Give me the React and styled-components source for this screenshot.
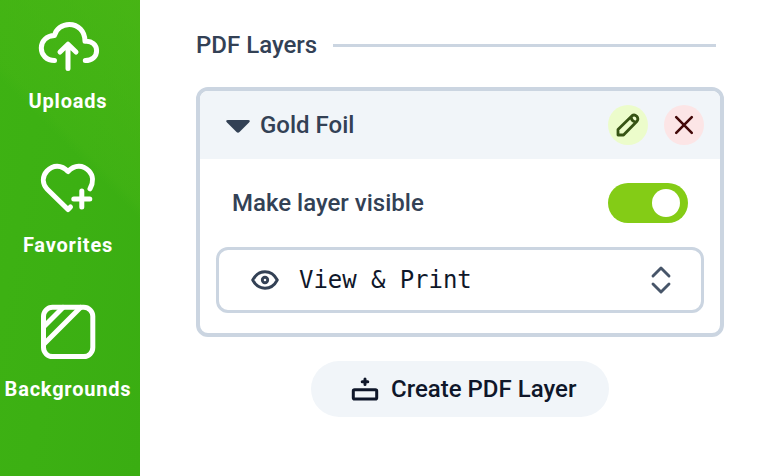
import React from "react";
import styled, { createGlobalStyle } from "styled-components";

const GlobalStyle = createGlobalStyle`
  * { box-sizing: border-box; }
  body {
    margin: 0;
    background: #fff;
    font-family: Roboto, sans-serif;
    overflow: hidden;
  }
  button { font: inherit; border: 0; padding: 0; color: inherit; }
  svg { display: block; flex: none; }
`;

const Page = styled.div`
  display: flex;
  width: 778px;
  height: 476px;
`;

const Sidebar = styled.nav`
  width: 140px;
  flex: none;
  background:
    linear-gradient(45deg, transparent 64.5%, rgba(76, 184, 22, 0.25) 67%, rgba(79, 184, 22, 0.6) 100%),
    linear-gradient(100deg, #3eb213 0%, #3cb013 50%, #3aad12 100%);
`;

const SidebarItem = styled.a`
  display: flex;
  flex-direction: column;
  height: 144px;
  padding-top: 15px;
  color: #fff;
`;

const SidebarIcon = styled.svg`
  width: 64px;
  height: 64px;
  margin-left: 36px;
  fill: none;
  stroke: currentColor;
  stroke-width: 5;
  stroke-linecap: round;
  stroke-linejoin: round;
`;

const SidebarLabel = styled.span`
  margin-top: 10px;
  width: 136px;
  text-align: center;
  font-size: 20px;
  line-height: 24px;
  font-weight: 700;
  letter-spacing: 0.8px;
  white-space: nowrap;
`;

const Panel = styled.main`
  width: 528px;
  margin-left: 56px;
  padding-top: 27px;
  display: flex;
  flex-direction: column;
`;

const Heading = styled.h2`
  margin: 0;
  padding-right: 8px;
  display: flex;
  align-items: center;
  gap: 16px;
  height: 36px;
  font-size: 24px;
  font-weight: 500;
  color: #334155;
  &::after {
    content: "";
    flex: 1;
    height: 3px;
    background: #cbd5e1;
  }
`;

const Card = styled.section`
  margin-top: 24px;
  height: 250px;
  border: 4px solid #cbd5e1;
  border-radius: 12px;
  overflow: hidden;
  color: #334155;
  font-size: 24px;
  font-weight: 500;
`;

const CardHeader = styled.header`
  display: flex;
  align-items: center;
  height: 68px;
  padding: 0 16px 0 26px;
  background: #f1f5f9;
`;

const LayerName = styled.span`
  margin-left: 10px;
  flex: 1;
`;

const RoundButton = styled.button`
  display: grid;
  place-items: center;
  width: 40px;
  height: 40px;
  margin-left: 16px;
  border-radius: 50%;
  background: ${(p) => p.$background};
  color: ${(p) => p.$color};
`;

const CardBody = styled.div`
  padding: 24px 16px 20px;
`;

const SettingRow = styled.div`
  display: flex;
  align-items: center;
  justify-content: space-between;
  padding: 0 16px;
  height: 40px;
`;

const Toggle = styled.button`
  display: flex;
  align-items: center;
  justify-content: flex-end;
  width: 80px;
  height: 40px;
  padding-right: 8px;
  border-radius: 20px;
  background: #84cc16;
`;

const Knob = styled.span`
  width: 28px;
  height: 28px;
  border-radius: 50%;
  background: #fff;
`;

const Select = styled.button`
  display: flex;
  align-items: center;
  width: 100%;
  height: 66px;
  margin-top: 24px;
  padding: 0 29px 0 31px;
  border: 3px solid #cbd5e1;
  border-radius: 12px;
  background: #fff;
`;

const SelectValue = styled.span`
  flex: 1;
  margin-left: 19px;
  text-align: left;
  font-family: "DejaVu Sans Mono", monospace;
  font-size: 24px;
  font-weight: 400;
  letter-spacing: -0.06px;
  color: #0f172a;
`;

const CreateButton = styled.button`
  align-self: center;
  display: flex;
  align-items: center;
  gap: 12px;
  height: 56px;
  width: 298px;
  padding-left: 40px;
  margin-top: 24px;
  border-radius: 28px;
  background: #f1f5f9;
  color: #0f172a;
  font-size: 24px;
  font-weight: 500;
  white-space: nowrap;
`;

const LineIcon = styled.svg`
  fill: none;
  stroke: ${(p) => p.$color || "currentColor"};
  stroke-width: ${(p) => p.$weight || 2.5};
  stroke-linecap: round;
  stroke-linejoin: round;
`;

const sidebarItems = [
  {
    label: "Uploads",
    icon: (
      <>
        <path d="M18.5 45.5C10.5 45.5 5.3 40 5.3 33C5.3 26 10.5 20.7 18.5 20.5C20 14 26 9.5 33.3 9.5C42 9.5 49 16 49 26.3C56 25.5 60.6 30 60.6 35.7C60.6 41.5 56 45.5 49.3 45.5" />
        <path d="M32 53.5V29.5M24 37L32 29.2L40 37" />
      </>
    ),
  },
  {
    label: "Favorites",
    icon: (
      <>
        <path d="M54 29.8C57.6 23.500 57.300 16.500 53 12C47 5.500 38.500 5.500 32 12.500C25.500 5.500 17 5.500 11 12C6 17.500 6.300 24.500 11 30L32 50.500L34.500 48" />
        <path d="M37.800 40H53.800M45.800 32V48" />
      </>
    ),
  },
  {
    label: "Backgrounds",
    icon: (
      <>
        <rect x="7.5" y="4.300" width="49.300" height="49.300" rx="9" />
        <path d="M8 23.500L27 4.500M8 41L44.500 4.500" />
      </>
    ),
  },
];

export default function App() {
  return (
    <>
      <GlobalStyle />
      <Page>
        <Sidebar>
          {sidebarItems.map(({ label, icon }) => (
            <SidebarItem key={label}>
              <SidebarIcon viewBox="0 0 64 64">{icon}</SidebarIcon>
              <SidebarLabel>{label}</SidebarLabel>
            </SidebarItem>
          ))}
        </Sidebar>
        <Panel>
          <Heading>PDF Layers</Heading>
          <Card>
            <CardHeader>
              <svg width="24" height="15" viewBox="0 0 24 15" fill="#334155">
                <path d="M2 2H22Q25 2 23 4.500L13.500 14Q12 15.500 10.500 14L1 4.500Q-1 2 2 2Z" />
              </svg>
              <LayerName>Gold Foil</LayerName>
              <RoundButton $background="#ecfccb" $color="#365314" aria-label="Edit layer">
                <LineIcon width="24" height="24" viewBox="0 0 24 24" $weight={2.8}>
                  <path d="M2 22V16.500L15.800 2.900Q18.300 1 20.700 3.200Q22.800 5.700 21 8.200L7.500 22ZM15.300 4.200Q15.500 8.500 19.800 8.800" />
                </LineIcon>
              </RoundButton>
              <RoundButton $background="#fce5e6" $color="#450a0a" aria-label="Delete layer">
                <LineIcon width="24" height="24" viewBox="0 0 24 24" $weight={2.6}>
                  <path d="M4.200 4.200L19.800 19.800M19.800 4.200L4.200 19.800" />
                </LineIcon>
              </RoundButton>
            </CardHeader>
            <CardBody>
              <SettingRow>
                <span>Make layer visible</span>
                <Toggle role="switch" aria-checked="true" aria-label="Make layer visible">
                  <Knob />
                </Toggle>
              </SettingRow>
              <Select>
                <LineIcon width="30" height="24" viewBox="0 0 30 24" $color="#334155" $weight={2.9}>
                  <path d="M2.700 12C8.500 1 21.500 1 27.300 12C21.500 23 8.500 23 2.700 12Z" />
                  <circle cx="15" cy="12" r="2.700" />
                </LineIcon>
                <SelectValue>View &amp; Print</SelectValue>
                <LineIcon width="22" height="30" viewBox="0 0 22 30" $color="#475569" $weight={2.9}>
                  <path d="M3 11L11 3L19 11M3 19L11 27L19 19" />
                </LineIcon>
              </Select>
            </CardBody>
          </Card>
          <CreateButton>
            <LineIcon width="28" height="28" viewBox="0 0 28 28" $weight={3}>
              <rect x="2.300" y="14.800" width="23.400" height="9.200" rx="1.300" />
              <path d="M14 4V9.500M11.200 6.700H16.800" />
            </LineIcon>
            <span>Create PDF Layer</span>
          </CreateButton>
        </Panel>
      </Page>
    </>
  );
}
